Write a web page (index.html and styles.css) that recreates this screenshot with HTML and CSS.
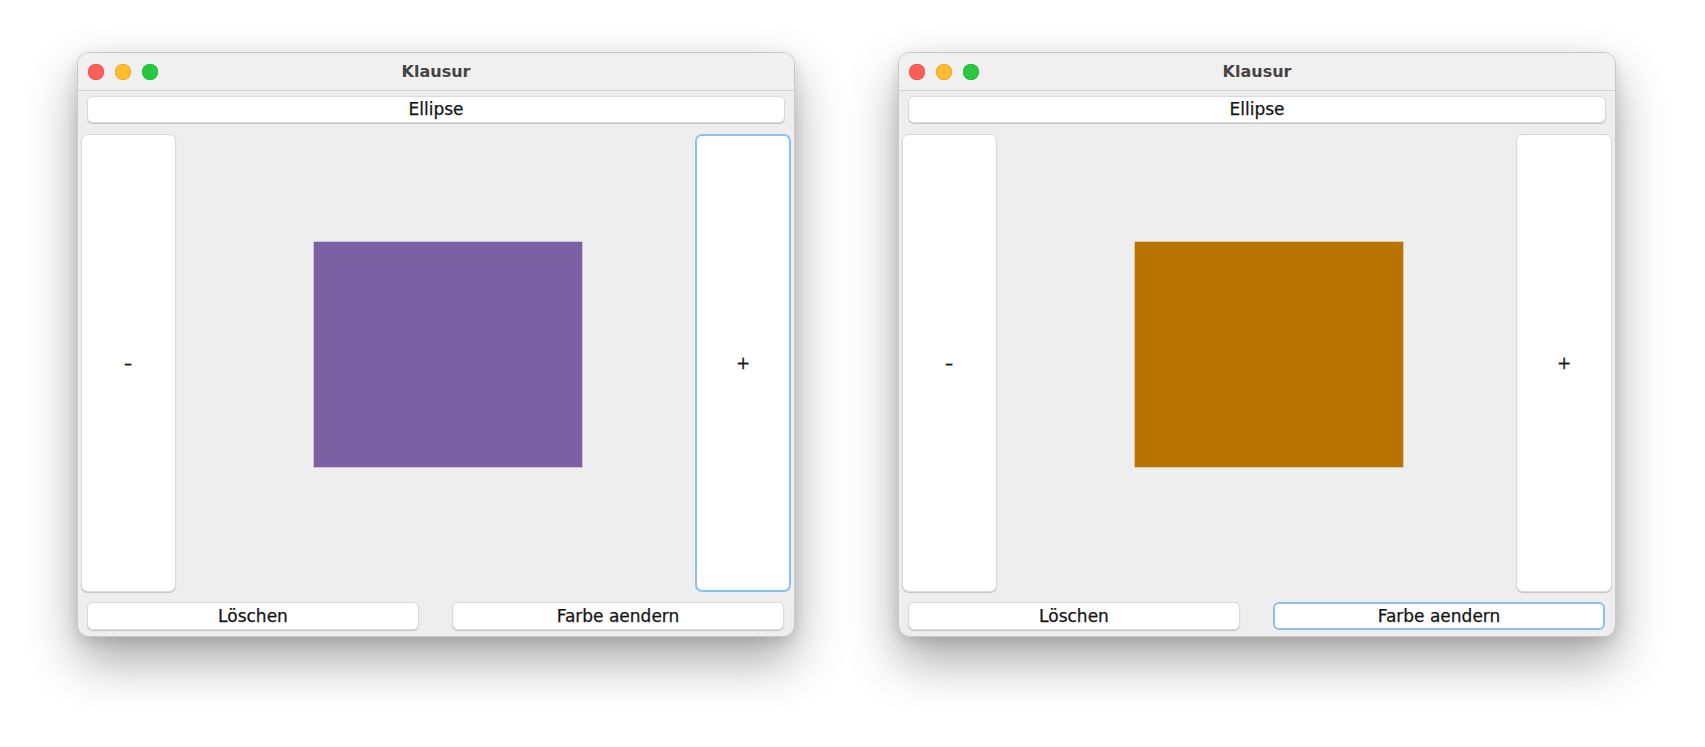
FILE: index.html
```html
<!DOCTYPE html>
<html lang="de">
<head>
<meta charset="utf-8">
<title>Klausur</title>
<link rel="stylesheet" href="styles.css">
</head>
<body>
<div class="desk">
  <div class="window">
    <div class="titlebar">
      <div class="lights">
        <span class="light red"></span>
        <span class="light yellow"></span>
        <span class="light green"></span>
      </div>
      <div class="title">Klausur</div>
    </div>
    <div class="content">
      <div class="btn top-btn">Ellipse</div>
      <div class="middle">
        <div class="btn side-btn"><span class="minus">-</span></div>
        <div class="canvas"><div class="shape purple"></div></div>
        <div class="btn side-btn focused">+</div>
      </div>
      <div class="bottom">
        <div class="btn">Löschen</div>
        <div class="btn">Farbe aendern</div>
      </div>
    </div>
  </div>
  <div class="window">
    <div class="titlebar">
      <div class="lights">
        <span class="light red"></span>
        <span class="light yellow"></span>
        <span class="light green"></span>
      </div>
      <div class="title">Klausur</div>
    </div>
    <div class="content">
      <div class="btn top-btn">Ellipse</div>
      <div class="middle">
        <div class="btn side-btn"><span class="minus">-</span></div>
        <div class="canvas"><div class="shape brown"></div></div>
        <div class="btn side-btn">+</div>
      </div>
      <div class="bottom">
        <div class="btn">Löschen</div>
        <div class="btn focused">Farbe aendern</div>
      </div>
    </div>
  </div>
</div>
</body>
</html>
```

FILE: styles.css
```css
* { box-sizing: border-box; }
html, body {
  margin: 0;
  padding: 0;
  background: #ffffff;
  min-height: 747px;
}
body {
  font-family: "DejaVu Sans", "Liberation Sans", sans-serif;
  color: #141414;
}
.desk {
  display: flex;
  gap: 103px;
  padding: 52px 0 110px 77px;
}
.window {
  width: 718px;
  height: 585px;
  flex: none;
  border: 1px solid #c9c9c9;
  border-radius: 12px;
  background: #eeeeee;
  box-shadow: 0 24px 50px rgba(0, 0, 0, 0.34), 0 4px 14px rgba(0, 0, 0, 0.12);
  overflow: hidden;
  display: flex;
  flex-direction: column;
}
.titlebar {
  height: 38px;
  flex: none;
  background: #f0f0f0;
  border-bottom: 1px solid #d3d3d3;
  display: grid;
  grid-template-columns: 1fr;
  align-items: center;
}
.lights, .title {
  grid-area: 1 / 1;
}
.lights {
  display: flex;
  gap: 11px;
  padding-left: 10px;
  padding-top: 1px;
}
.light {
  width: 16px;
  height: 16px;
  border-radius: 50%;
  display: block;
}
.red { background: #fe5f57; box-shadow: inset 0 0 0 0.5px #e2463f; }
.yellow { background: #febc2e; box-shadow: inset 0 0 0 0.5px #e1a116; }
.green { background: #28c840; box-shadow: inset 0 0 0 0.5px #14ae2a; }
.title {
  text-align: center;
  font-weight: bold;
  font-size: 16px;
  color: #454545;
  padding-top: 0;
}
.content {
  flex: 1;
  display: flex;
  flex-direction: column;
}
.btn {
  background: #ffffff;
  border: 1px solid #dadada;
  border-radius: 6px;
  box-shadow: 0 1px 1px rgba(0, 0, 0, 0.18);
  font-size: 17px;
  display: flex;
  align-items: center;
  justify-content: center;
  line-height: 1;
  -webkit-text-stroke: 0.25px #141414;
}
.btn.focused {
  border: 2px solid #8dc0f2;
  box-shadow: none;
}
.top-btn {
  height: 27px;
  margin: 5px 9px 0 9px;
}
.middle {
  height: 458px;
  margin: 11px 3px 0 3px;
  display: grid;
  grid-template-columns: 95px 1fr 96px;
}
.side-btn {
  border-radius: 7px;
}
.minus {
  display: inline-block;
  transform: scaleX(1.4);
}
.canvas {
  padding: 108px 0 0 138px;
}
.shape {
  width: 268px;
  height: 225px;
}
.purple { background: #7b60a4; box-shadow: 0 0 0 0.5px #a797c4; }
.brown { background: #b87300; box-shadow: 0 0 0 0.5px #d0a868; }
.bottom {
  height: 28px;
  margin: 10px 10px 0 9px;
  display: grid;
  grid-template-columns: 1fr 1fr;
  gap: 33px;
}
```
